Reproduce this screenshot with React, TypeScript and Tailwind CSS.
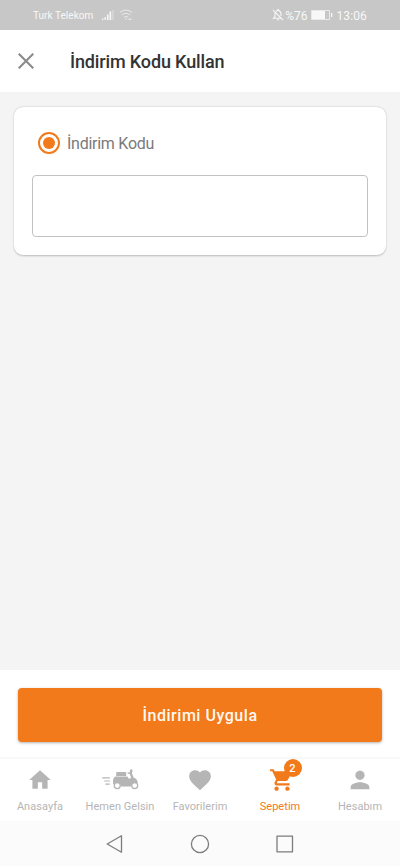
import React from 'react';

type NavItemProps = {
  label: string;
  active?: boolean;
  children: React.ReactNode;
};

function NavItem({ label, active, children }: NavItemProps) {
  return (
    <button
      className={`flex w-20 flex-col items-center pt-[7px] ${active ? 'text-[#f27a1a]' : 'text-[#b5b5b5]'}`}
    >
      <span className="relative flex h-[28px] items-center justify-center">{children}</span>
      <span className="mt-[6px] whitespace-nowrap text-[11px] leading-[14px] tracking-[0.040px]">{label}</span>
    </button>
  );
}

function MaterialIcon({ d, className = 'size-[26px]' }: { d: string; className?: string }) {
  return (
    <svg className={className} viewBox="0 0 24 24" fill="currentColor">
      <path d={d} />
    </svg>
  );
}

function ScooterIcon() {
  return (
    <svg width="38" height="26" viewBox="0 0 38 26" fill="none" stroke="currentColor">
      <path d="M1.300 10.900h7.500M3.300 14h5.500M4.300 17.100h4.500" strokeWidth="1.200" />
      <circle cx="16.300" cy="18.600" r="3" strokeWidth="1.300" />
      <circle cx="33.700" cy="18.600" r="3" strokeWidth="1.300" />
      <path
        d="M15.200 5.900q0-.8.800-.8h8.400q.8 0 .8.800v3h-10zM14.300 9.500h11.500q1 0 1.200.8l.4 1.200h2.200l.3-1.500-1.200-3.100-2.200-.3V5.400l2.300-.2.100-2 1.300-1.100 1.200.7.100 2-.7 1.200 1.800 4.600c2.300.7 3.800 2.400 4.200 4.800l-.9 1.100c-2.800-1.500-5.400-.1-6 2.900H20.300c-.5-3.500-4.800-4.500-8.200-2l-.1-3.500c.1-2 .9-3.600 2.300-4.400z"
        fill="currentColor"
        stroke="none"
      />
    </svg>
  );
}

function StatusBar() {
  return (
    <div className="flex h-[30px] items-center bg-[#c7c7c7] pl-[33px] pr-[33px] text-[#f8f8f8]">
      <span className="mt-px text-[10px] leading-[14px] tracking-[0.040px]">Turk Telekom</span>
      <svg className="ml-[9px]" width="13" height="12" viewBox="0 0 13 12" fill="currentColor">
        <path d="M0 9.500h1.400V11H0zM2.500 8h1.400v3H2.500zM5 5.500h1.500V11H5zM7.500 2.500h1.700V11H7.500z" />
        <path d="M10.300 1h1.400v10h-1.400z" opacity=".4" />
      </svg>
      <svg className="ml-[4px]" width="14" height="12" viewBox="0 0 14 12" fill="none" stroke="currentColor" opacity=".7">
        <path d="M.8 3.500q6-5 12.400 0M2.800 6q4.200-3.300 8.400 0M4.800 8.300q2.200-1.600 4.400 0" strokeWidth="1" />
        <path d="M6 10h1.800M9.500 10.300h3" strokeWidth="1.200" />
      </svg>
      <div className="ml-auto flex items-center">
        <svg width="12" height="12" viewBox="0 0 12 12" fill="none" stroke="currentColor" strokeWidth="1.100">
          <path d="M1 1.200l10 9.800M3 4v3.600L1.500 9.200h7.700M4 2.500L5.300 1.700V.7h1.400v1C8.400 2.200 9 3.400 9 5v2M5 10.700h2" />
        </svg>
        <span className="ml-px mt-px text-[12px] leading-[14px]">%76</span>
        <svg className="ml-[4px]" width="22" height="10" viewBox="0 0 22 10" fill="currentColor">
          <path d="M.5.500h18v9H.5z" fill="none" stroke="currentColor" opacity=".7" />
          <path d="M1 1h13v8H1zM20 3h1.300v4H20z" />
        </svg>
        <span className="ml-[3px] mt-px text-[12px] leading-[14px] tracking-[0.130px]">13:06</span>
      </div>
    </div>
  );
}

export default function App() {
  return (
    <div className="flex h-[866px] w-[400px] flex-col overflow-hidden bg-[#f4f4f4] font-['Roboto',sans-serif]">
      <StatusBar />
      <header className="flex h-[62px] items-center bg-white pl-[18px]">
        <button aria-label="Kapat">
          <svg width="16" height="16" viewBox="0 0 16 16" fill="none" stroke="#8b8b8b" strokeWidth="2.100">
            <path d="M.7.700l14.600 14.600M15.300.700L.7 15.300" />
          </svg>
        </button>
        <h1 className="ml-[36px] mt-px text-[18px] font-medium leading-6 tracking-[-0.140px] text-[#333]">
          İndirim Kodu Kullan
        </h1>
      </header>

      <main className="flex-1 px-[14px] pt-[15px]">
        <section className="h-[148px] rounded-[9px] bg-white px-[18px] pt-[25px] shadow-[0_0.500px_2px_rgba(0,0,0,0.24)]">
          <label className="flex h-[22px] items-center pl-[6px]">
            <span className="flex size-[22px] items-center justify-center rounded-full border-2 border-[#f27a1a]">
              <span className="size-[12px] rounded-full bg-[#f27a1a]" />
            </span>
            <span className="ml-[7px] mt-px text-[16px] leading-5 tracking-[-0.260px] text-[#7a7a7a]">İndirim Kodu</span>
          </label>
          <input
            aria-label="İndirim Kodu"
            className="mt-[21px] block h-[62px] w-full rounded-[4px] border border-[#c2c2c2] bg-white px-3 outline-none"
          />
        </section>
      </main>

      <div className="h-[87px] bg-white px-[18px] pt-[18px]">
        <button className="flex h-[54px] w-full items-center justify-center rounded-[4px] bg-[#f27a1a] pt-[2px] text-[16px] font-medium tracking-[0.530px] text-[#fff8ef] shadow-[0_1px_3px_rgba(0,0,0,0.3)]">
          İndirimi Uygula
        </button>
      </div>

      <nav className="flex h-[64px] border-t-2 border-[#f8f8f8] bg-white">
        <NavItem label="Anasayfa">
          <MaterialIcon d="M10 20v-6h4v6h5v-8h3L12 3 2 12h3v8z" />
        </NavItem>
        <NavItem label="Hemen Gelsin">
          <ScooterIcon />
        </NavItem>
        <NavItem label="Favorilerim">
          <MaterialIcon d="M12 21.350l-1.450-1.320C5.400 15.360 2 12.280 2 8.500 2 5.420 4.420 3 7.500 3c1.740 0 3.410.810 4.500 2.090C13.090 3.810 14.760 3 16.500 3 19.580 3 22 5.420 22 8.500c0 3.780-3.400 6.860-8.550 11.540L12 21.350z" />
        </NavItem>
        <NavItem label="Sepetim" active>
          <MaterialIcon
            className="ml-[3px] size-[26px]"
            d="M7 18c-1.100 0-1.990.900-1.990 2S5.900 22 7 22s2-.900 2-2-.900-2-2-2zM1 2v2h2l3.600 7.590-1.350 2.450c-.160.280-.250.610-.250.960 0 1.100.900 2 2 2h12v-2H7.420c-.140 0-.250-.110-.250-.250l.030-.120.900-1.630h7.450c.750 0 1.410-.410 1.750-1.030l3.580-6.490A1.003 1.003 0 0020 4H5.210l-.940-2H1zm16 16c-1.100 0-1.990.900-1.990 2s.890 2 1.990 2 2-.900 2-2-.900-2-2-2z"
          />
          <span className="absolute left-[18px] top-[-7px] flex size-[18px] items-center justify-center rounded-full bg-[#f27a1a] text-[11px] font-medium leading-none text-white">
            2
          </span>
        </NavItem>
        <NavItem label="Hesabım">
          <MaterialIcon
            className="size-[28px]"
            d="M12 12c2.210 0 4-1.790 4-4s-1.790-4-4-4-4 1.790-4 4 1.790 4 4 4zm0 2c-2.670 0-8 1.340-8 4v2h16v-2c0-2.660-5.330-4-8-4z"
          />
        </NavItem>
      </nav>

      <div className="flex h-[45px] items-center bg-[#fbfbfb] pl-[106px]">
        <svg width="188" height="20" viewBox="0 0 188 20" fill="none" stroke="#7d7d7d" strokeWidth="1.300" strokeLinejoin="round">
          <path d="M15.500 1.800v16.400L1.200 10z" />
          <circle cx="94" cy="10" r="8.600" />
          <path d="M171 2.200h15.500v15.600H171z" />
        </svg>
      </div>
    </div>
  );
}
